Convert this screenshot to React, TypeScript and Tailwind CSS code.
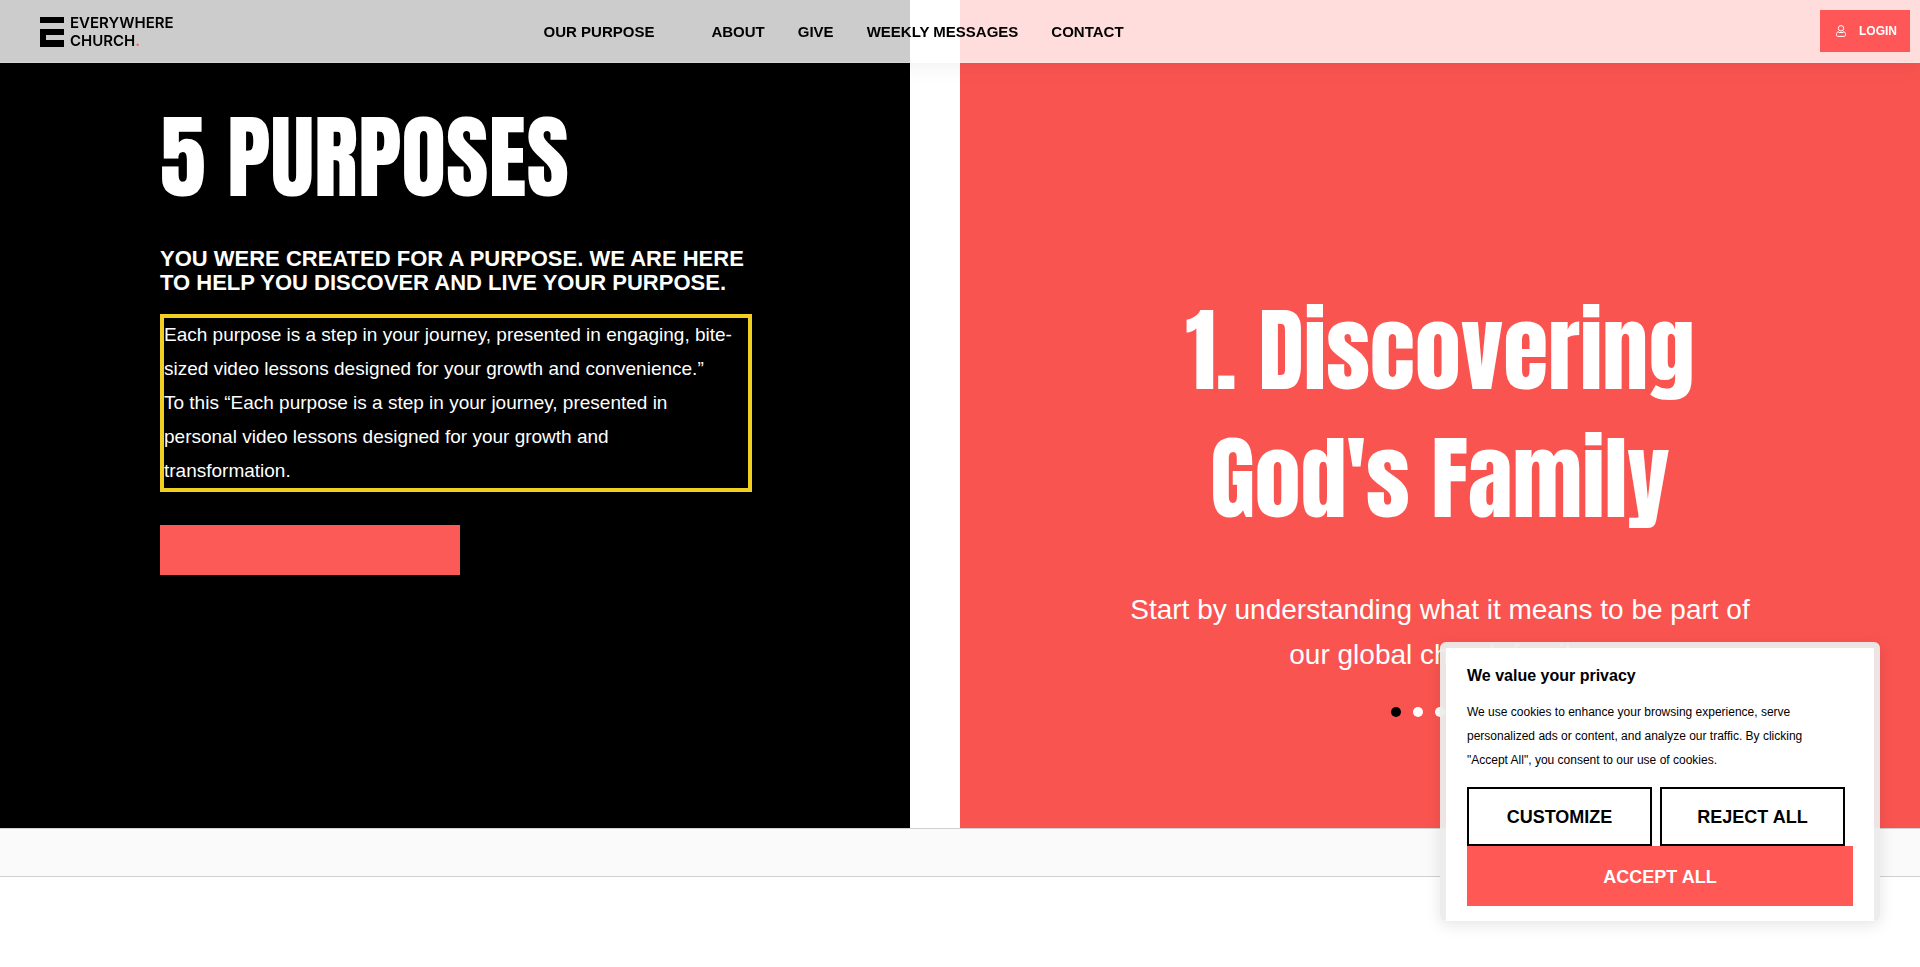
import { FC } from 'react';

interface TNavItem {
    label: string;
    className?: string;
}

const navItems: TNavItem[] = [
    { label: 'OUR PURPOSE', className: 'mr-6' },
    { label: 'ABOUT' },
    { label: 'GIVE' },
    { label: 'WEEKLY MESSAGES' },
    { label: 'CONTACT' },
];

const slides = [1, 2, 3, 4, 5];

const Logo: FC = () => {
    return (
        <a
            href="#home"
            aria-label="Everywhere Church"
            className="flex items-center gap-[6px] pt-[2px]"
        >
            <svg width="24" height="30" viewBox="0 0 24 30" fill="#000">
                <rect width="24" height="6" />
                <path d="M0 12h24v6H6v5h18v7H0z" />
            </svg>
            <span className="font-[Inter,sans-serif] text-[15px] leading-[18px] font-semibold text-black">
                EVERYWHERE
                <br />
                CHURCH<span className="text-[#ff5757]">.</span>
            </span>
        </a>
    );
};

const Header: FC = () => {
    return (
        <header className="fixed inset-x-0 top-0 z-10 flex h-[63px] items-center border-b border-white/20 bg-white/80 pr-[10px] pl-10 shadow-[0_2px_20px_rgba(0,0,0,0.07)]">
            <Logo />
            <nav className="flex flex-1 items-center gap-[33px] pt-[2px] pl-[370px] text-[15px] font-bold">
                {navItems.map((it) => (
                    <a
                        key={it.label}
                        href="#menu"
                        className={`whitespace-nowrap ${it.className ?? ''}`}
                    >
                        {it.label}
                    </a>
                ))}
            </nav>
            <button className="flex h-[42px] items-center gap-[13px] bg-[#ff5757] pr-[13px] pl-4 text-[12px] font-bold text-white">
                <svg
                    width="10"
                    height="12"
                    viewBox="0 0 10 12"
                    fill="none"
                    stroke="#fff"
                    strokeWidth="1"
                >
                    <circle cx="5" cy="3.3" r="2.7" />
                    <path d="M3.2 5.6 2.2 6.600C1 7.2.5 8.200.5 9.400v.8c0 .7.5 1.200 1.200 1.200h6.600c.7 0 1.200-.5 1.200-1.200v-.8c0-1.200-.5-2.200-1.700-2.800L6.800 5.600M2.500 7.500h5" />
                </svg>
                LOGIN
            </button>
        </header>
    );
};

const Purposes: FC = () => {
    return (
        <div className="mr-[50px] bg-black pt-[98px] pr-[158px] pl-40 text-white">
            <h1 className="font-[Anton,Impact,'Liberation_Sans',sans-serif] text-[92px] leading-[118px]">
                5 PURPOSES
            </h1>
            <h2 className="mt-[31px] text-[22px] leading-[24px] font-bold">
                YOU WERE CREATED FOR A PURPOSE. WE ARE HERE
                <br />
                TO HELP YOU DISCOVER AND LIVE YOUR PURPOSE.
            </h2>
            <p className="mt-[19px] border-4 border-[#f2d022] text-[19px] leading-[34px]">
                Each purpose is a step in your journey, presented in engaging,
                bite-sized video lessons designed for your growth and
                convenience.”
                <br />
                To this “Each purpose is a step in your journey, presented in
                <br />
                personal video lessons designed for your growth and
                <br />
                transformation.
            </p>
            <button
                aria-label="Start"
                className="mt-[33px] block h-[50px] w-[300px] bg-[#fc5a56]"
            />
        </div>
    );
};

const Slide: FC = () => {
    return (
        <div className="flex flex-col items-center bg-[#f95450] pt-[286px] text-center text-white">
            <h2 className="font-[Anton,Impact,'Liberation_Sans',sans-serif] text-[92px] leading-[128px]">
                1. Discovering
                <br />
                God's Family
            </h2>
            <p className="mt-[45px] w-[650px] text-[28px] leading-[45px]">
                Start by understanding what it means to be part of our global
                church family.
            </p>
            <div className="mt-[30px] flex gap-3">
                {slides.map((it) => (
                    <button
                        key={it}
                        aria-label={`Slide ${it}`}
                        className={`size-[10px] rounded-full ${it === 1 ? 'bg-black' : 'bg-white'}`}
                    />
                ))}
            </div>
        </div>
    );
};

const CookieBanner: FC = () => {
    return (
        <section
            aria-label="We value your privacy"
            className="fixed top-[642px] right-10 z-20 w-[440px] rounded-md bg-[#ececec]/95 px-[6px] pt-[6px] shadow-[0_4px_16px_rgba(0,0,0,0.1)]"
        >
            <div className="bg-white px-[21px] pt-4 pb-[15px] text-black">
                <h3 className="text-[16px] leading-6 font-bold">
                    We value your privacy
                </h3>
                <p className="mt-3 text-[12px] leading-6">
                    We use cookies to enhance your browsing experience, serve
                    <br />
                    personalized ads or content, and analyze our traffic. By
                    clicking
                    <br />
                    "Accept All", you consent to our use of cookies.
                </p>
                <div className="mt-[15px] flex gap-2 pr-2 text-[18px] font-bold">
                    <button className="h-[59px] flex-1 border-2 border-black pt-[2px]">
                        CUSTOMIZE
                    </button>
                    <button className="h-[59px] flex-1 border-2 border-black pt-[2px]">
                        REJECT ALL
                    </button>
                </div>
                <button className="h-[60px] w-full bg-[#ff5855] pt-[2px] text-[18px] font-bold text-white">
                    ACCEPT ALL
                </button>
            </div>
        </section>
    );
};

const App: FC = () => {
    return (
        <div className="min-h-screen bg-white font-['Liberation_Sans',Arial,sans-serif] text-black">
            <Header />
            <main className="grid min-h-[828px] grid-cols-2">
                <Purposes />
                <Slide />
            </main>
            <div className="h-[49px] border-y border-[#d0d0d0] bg-[#fafafa]" />
            <CookieBanner />
        </div>
    );
};

export default App;
